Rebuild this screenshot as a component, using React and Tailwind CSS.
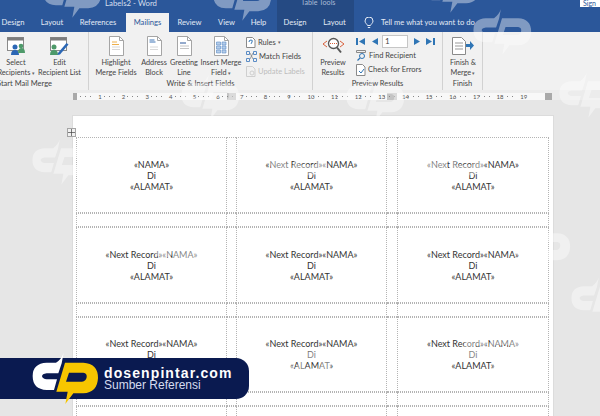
const rows = [
  [['«NAMA»', 'Di', '«ALAMAT»'], ['«Next Record»«NAMA»', 'Di', '«ALAMAT»'], ['«Next Record»«NAMA»', 'Di', '«ALAMAT»']],
  [['«Next Record»«NAMA»', 'Di', '«ALAMAT»'], ['«Next Record»«NAMA»', 'Di', '«ALAMAT»'], ['«Next Record»«NAMA»', 'Di', '«ALAMAT»']],
  [['«Next Record»«NAMA»', 'Di', '«ALAMAT»'], ['«Next Record»«NAMA»', 'Di', '«ALAMAT»'], ['«Next Record»«NAMA»', 'Di', '«ALAMAT»']],
];

const tabs = [
  ['Design', 'w-[22px] ml-[2px]'],
  ['Layout', 'w-[22px] ml-[17px]'],
  ['References', 'w-[36px] ml-[17px]'],
  ['Mailings', 'w-[43px] ml-[10px] h-full bg-[#f1f1f1] text-[#2b579a]'],
  ['Review', 'w-[23px] ml-[9px]'],
  ['View', 'w-[17px] ml-[17px]'],
  ['Help', 'w-[17px] ml-[15px]'],
  ['Design', 'w-[22px] ml-[17px]'],
  ['Layout', 'w-[23px] ml-[17px]'],
];

// --- Logo mark, used for the banner and the watermarks ---
function Mark({ left, right, className = '' }) {
  return (
    <svg viewBox="0 0 270 180" className={className}>
      <path d="M131 8L125 40L115 70L80 70Q66 72 66 79Q68 87 80 88L111 88L102 120L80 120Q38 118 38 78Q38 40 80 38L108 38Q124 28 131 8Z" fill={left} />
      <path fillRule="evenodd" d="M135 38L190 38Q234 40 234 84Q232 128 190 130L160 130L136 162L143 125L109 125ZM147 68L190 68Q202 70 200 82Q198 94 186 95L138 95Z" fill={right} />
    </svg>
  );
}

function Wm({ className }) {
  return <Mark left="#fff" right="#fff" className={`absolute w-[80px] h-[53px] opacity-[0.4] pointer-events-none ${className}`} />;
}

// --- Ribbon icons ---
function SheetIcon({ kind }) {
  return (
    <svg width="15" height="20" viewBox="0 0 15 20" fill="none">
      <path d="M.5.5h10l4 4v15H.5z" fill="#fff" stroke="#a5a5a5" />
      <path d="M10.500.5v4h4" stroke="#a5a5a5" />
      {kind === 'highlight' && <><path d="M3 6h5M3 8.500h7" stroke="#eeb04c" /><path d="M3 11h8M3 13.500h8" stroke="#d8d8d8" /></>}
      {kind === 'address' && <><path d="M2.500 4h5M2.500 6h6" stroke="#3f74b5" /><path d="M3 11h8M3 13.500h8" stroke="#d8d8d8" /></>}
      {kind === 'greeting' && <><path d="M3 7h6" stroke="#2b579a" /><path d="M3 10h9M3 12.500h9" stroke="#c4c4c4" /></>}
      {kind === 'field' && <path d="M2.500 6h4v3h-4zM8 6h4v3H8zM2.500 10h4v3h-4zM8 10h4v3H8zM2.500 14h4v3h-4zM8 14h4v3H8z" fill="#b5cde9" stroke="#5b8cc6" strokeWidth=".6" />}
    </svg>
  );
}

function RecipientsIcon({ edit }) {
  return (
    <svg width="19" height="18" viewBox="0 0 19 18" fill="none">
      <rect x=".5" y=".5" width="16" height="13" fill="#fff" stroke="#8a8a8a" />
      <rect x=".5" y=".5" width="16" height="3" fill="#7d7d7d" />
      <circle cx={edit ? 4 : 8} cy="10" r="2.500" fill={edit ? '#4e9a6a' : '#2b67b5'} />
      <path d={edit ? 'M0 18q0-5 4-5t4 5z' : 'M4 18q0-5 4-5t4 5z'} fill={edit ? '#4e9a6a' : '#2b67b5'} />
      {edit ? (
        <path d="M8 16l8.500-10 2 1.500-8.500 10-2.500.5z" fill="#2b67b5" />
      ) : (
        <>
          <circle cx="14" cy="9" r="2.300" fill="#4e9a6a" />
          <path d="M11 16q0-5 3.500-5t3.500 5z" fill="#4e9a6a" />
        </>
      )}
    </svg>
  );
}

function BigButton({ icon, lines, width, caret }) {
  return (
    <div className="flex flex-col items-center shrink-0" style={{ width }}>
      <div className="h-[21px] flex items-center justify-center">{icon}</div>
      <div className="mt-[2px] text-center leading-[10px] text-[7.3px] text-[#444] whitespace-nowrap">
        <div>{lines[0]}</div>
        <div>{lines[1]}{caret && <span className="text-[5px] text-[#666]"> ▾</span>}</div>
      </div>
    </div>
  );
}

function SmallRow({ icon, label, faded, caret }) {
  return (
    <div className={`flex items-center gap-[2px] h-[14.5px] text-[7.5px] whitespace-nowrap ${faded ? 'text-[#bdbdbd]' : 'text-[#444]'}`}>
      {icon}
      <span>{label}</span>
      {caret && <span className="text-[5px] text-[#666]">▾</span>}
    </div>
  );
}

function Group({ label, width, children, labelClass = 'text-center' }) {
  return (
    <div className="flex flex-col h-full pt-[2px] shrink-0 overflow-hidden border-r border-[#d2d2d2]" style={{ width }}>
      <div className="flex-1 flex pt-[1px]">{children}</div>
      <div className={`text-[7.5px] leading-[10px] h-[11px] text-[#444] whitespace-nowrap ${labelClass}`}>{label}</div>
    </div>
  );
}

function NavArrow({ d }) {
  return (
    <svg width="9" height="9" viewBox="0 0 9 9" className="shrink-0">
      <path d={d} fill="#2f75b5" />
    </svg>
  );
}

function Ruler() {
  const nums = Array.from({ length: 19 }, (_, i) => i + 1);
  return (
    <div className="h-[10px] bg-[#ececec] pl-[73px] pt-[3px]">
      <div className="relative w-[479px] h-[7px] bg-[#f8f8f8] flex pl-[3px] text-[6px] leading-[7px] text-[#555]">
        <div className="absolute left-0 top-0 w-[4px] h-full bg-[#a9a9a9]" />
        <div className="absolute left-[154px] top-0 w-[9px] h-full bg-[#c4c4c4]" />
        <div className="absolute left-[314px] top-0 w-[10px] h-full bg-[#c4c4c4]" />
        <div className="absolute right-0 top-0 w-[7px] h-full bg-[#a9a9a9]" />
        {nums.map((n) => (
          <div key={n} className="w-[23.65px] shrink-0 flex justify-end items-center gap-[4px] relative">
            <span className="w-[1px] h-[1px] bg-[#888]" />
            <span className="w-[1px] h-[1px] bg-[#888]" />
            <span className="w-[1px] h-[1px] bg-[#888] mr-[1px]" />
            <span className="translate-x-[2px]">{n}</span>
          </div>
        ))}
      </div>
    </div>
  );
}

function Cell({ lines = [] }) {
  return (
    <div className="border border-dotted border-[#b4b4b4] flex flex-col items-center justify-center text-[9px] leading-[11px] text-[#333] whitespace-nowrap">
      {lines.map((l, i) => <div key={i}>{l}</div>)}
    </div>
  );
}

function Spacer() {
  return <div className="border-y border-dotted border-[#b4b4b4]" />;
}

export default function App() {
  return (
    <div className="relative w-[600px] h-[416px] overflow-hidden bg-[#e6e6e6] font-['Lato','Liberation_Sans',sans-serif]">
      {/* --- Title bar + tabs --- */}
      <div className="relative h-[32px] bg-[#2b579a] text-white">
        <div className="absolute left-[277px] top-0 w-[77px] h-full bg-[#254a83]" />
        <div className="absolute left-[105px] top-[-2px] text-[7.8px] leading-[10px] text-[#d5dfee]">Labels2 - Word</div>
        <div className="absolute left-[301px] top-[-2px] text-[7.2px] leading-[10px] text-[#a9bbd6]">Table Tools</div>
        <div className="absolute right-0 top-0 w-[20px] h-[7px] bg-white text-[7px] leading-[6px] text-[#2b579a] pl-[3px] overflow-hidden">Sign</div>
        <div className="absolute left-0 top-[13px] right-0 h-[19px] flex items-center text-[7.6px] text-[#e4ebf5]">
          {tabs.map(([name, cls], i) => (
            <span key={i} className={`flex items-center justify-center whitespace-nowrap shrink-0 ${cls}`}>{name}</span>
          ))}
          <svg width="10" height="12" viewBox="0 0 10 12" fill="none" className="ml-[18px] shrink-0">
            <path d="M3.500 8.500C3 7 1 6 1 4a4 4 0 0 1 8 0c0 2-2 3-2.500 4.500zM3.800 10.500h2.400" stroke="#e4ebf5" />
          </svg>
          <span className="ml-[7px] whitespace-nowrap">Tell me what you want to do</span>
        </div>
      </div>

      {/* --- Ribbon --- */}
      <div className="h-[58px] bg-[#f1f1f1] flex">
        <Group label="Start Mail Merge" width={89} labelClass="-ml-[3px]">
          <div className="-ml-[4px] flex">
            <BigButton width={40} caret lines={['Select', 'Recipients']} icon={<RecipientsIcon />} />
            <BigButton width={47} lines={['Edit', 'Recipient List']} icon={<RecipientsIcon edit />} />
          </div>
        </Group>
        <Group label="Write & Insert Fields" width={224}>
          <div className="flex pl-[6px]">
            <BigButton width={42} lines={['Highlight', 'Merge Fields']} icon={<SheetIcon kind="highlight" />} />
            <BigButton width={34} lines={['Address', 'Block']} icon={<SheetIcon kind="address" />} />
            <BigButton width={26} lines={['Greeting', 'Line']} icon={<SheetIcon kind="greeting" />} />
            <BigButton width={48} caret lines={['Insert Merge', 'Field']} icon={<SheetIcon kind="field" />} />
            <div className="ml-[1px] flex flex-col">
              <SmallRow caret label="Rules" icon={<svg width="10" height="11" viewBox="0 0 10 11" fill="none"><path d="M.5.5h6l2.500 2.500v7.500H.5z" fill="#fff" stroke="#8a8a8a" /><path d="M3 5q0-2 2-2t1 2-1 2" stroke="#2f75b5" /></svg>} />
              <SmallRow label="Match Fields" icon={<svg width="11" height="11" viewBox="0 0 11 11" fill="none"><path d="M.5.5h3v3h-3zM7.500.5h3v3h-3zM.5 7.500h3v3h-3zM7.500 7.500h3v3h-3z" stroke="#5b8cc6" /><path d="M4 2l3 6M7 2L4 8" stroke="#666" strokeWidth=".6" /></svg>} />
              <SmallRow faded label="Update Labels" icon={<svg width="10" height="11" viewBox="0 0 10 11" fill="none"><path d="M.5.5h6l2.500 2.500v7.500H.5z" stroke="#cfcfcf" /><circle cx="6" cy="7" r="2" stroke="#cfcfcf" /></svg>} />
            </div>
          </div>
        </Group>
        <Group label="Preview Results" width={130}>
          <BigButton width={40} lines={['Preview', 'Results']} icon={
            <svg width="23" height="17" viewBox="0 0 23 17" fill="none">
              <path d="M5 4L1 7l4 3M18 4l4 3-4 3" stroke="#d9603c" />
              <circle cx="11.500" cy="6.500" r="5" fill="#fff" stroke="#555" strokeWidth="1.300" />
              <path d="M15 10.500l4 5" stroke="#555" strokeWidth="2" />
              <path d="M8 6.500h7" stroke="#d9603c" strokeDasharray="1 1" />
            </svg>
          } />
          <div className="pl-[3px] flex flex-col">
            <div className="flex items-center h-[13px]">
              <NavArrow d="M0 1h2v7H0zM9 1v7L3 4.500z" />
              <span className="ml-[5px]"><NavArrow d="M8 1v7L2 4.500z" /></span>
              <div className="ml-[3px] w-[26px] h-[13px] bg-white border border-[#c6c6c6] text-[8px] leading-[11px] pl-[2px] text-[#444]">1</div>
              <span className="ml-[5px]"><NavArrow d="M1 1v7l6-3.500z" /></span>
              <span className="ml-[4px]"><NavArrow d="M0 1v7l6-3.500zM7 1h2v7H7z" /></span>
            </div>
            <div>
              <SmallRow label="Find Recipient" icon={<svg width="11" height="11" viewBox="0 0 11 11" fill="none"><path d="M.5.5h9v2h-9z" stroke="#8a8a8a" /><circle cx="6" cy="6" r="2.500" stroke="#2f75b5" /><path d="M4 8L1.500 10.500" stroke="#2f75b5" strokeWidth="1.300" /></svg>} />
              <SmallRow label="Check for Errors" icon={<svg width="10" height="12" viewBox="0 0 10 12" fill="none"><path d="M.5.5h6l2.500 2.500v8.500H.5z" fill="#fff" stroke="#8a8a8a" /><path d="M3 7l2 2 3-4" stroke="#2f75b5" /></svg>} />
            </div>
          </div>
        </Group>
        <Group label="Finish" width={40}>
          <BigButton width={40} caret lines={['Finish &', 'Merge']} icon={
            <svg width="24" height="20" viewBox="0 0 24 20" fill="none">
              <path d="M1.500 1.500h9l4 4v13h-13z" fill="#fff" stroke="#8a8a8a" />
              <path d="M4 7h8M4 10h8M4 13h8" stroke="#999" />
              <path d="M15 8h4V5l4 4.500-4 4.500v-3h-4z" fill="#2f75b5" />
            </svg>
          } />
        </Group>
      </div>

      <Ruler />

      {/* --- Document --- */}
      <div className="relative pl-[73px] pt-[16px]">
        <div className="w-[480px] bg-white h-[300px] pt-[21px] pl-[3px] shadow-[0_0_0_1px_#dcdcdc]">
          <div className="grid grid-cols-[151px_9px_151px_10px_152px] grid-rows-[76px_14px_76px_14px_75px_14px_76px] w-[473px]">
            {rows.map((r, i) => (
              <div key={i} className="contents">
                <Cell lines={r[0]} />
                <Spacer />
                <Cell lines={r[1]} />
                <Spacer />
                <Cell lines={r[2]} />
                <Cell /><Spacer /><Cell /><Spacer /><Cell />
              </div>
            ))}
            <Cell /><Spacer /><Cell /><Spacer /><Cell />
          </div>
        </div>
        <div className="absolute left-[67px] top-[28px] w-[9px] h-[9px] bg-[#f1f1f1] border border-[#a5a5a5] flex items-center justify-center">
          <svg width="7" height="7" viewBox="0 0 7 7" fill="none"><path d="M3.500 0v7M0 3.500h7" stroke="#444" strokeWidth=".7" /></svg>
        </div>
      </div>

      {/* --- Watermarks --- */}
      <Wm className="left-[32px] top-[-30px]" />
      <Wm className="left-[202px] top-[-27px]" />
      <Wm className="left-[410px] top-[-35px]" />
      <Wm className="left-[462px] top-[7px]" />
      <Wm className="left-[21px] top-[137px]" />
      <Wm className="left-[170px] top-[72px]" />
      <Wm className="left-[335px] top-[74px]" />
      <Wm className="left-[548px] top-[70px]" />
      <Wm className="left-[258px] top-[137px]" />
      <Wm className="left-[415px] top-[137px]" />
      <Wm className="left-[140px] top-[222px]" />
      <Wm className="left-[262px] top-[340px]" />
      <Wm className="left-[452px] top-[325px]" />
      <Wm className="left-[501px] top-[222px]" />
      <Wm className="left-[560px] top-[275px]" />

      {/* --- Banner --- */}
      <div className="absolute left-0 top-[358px] w-[249px] h-[41px] bg-[#0a1a50] rounded-r-[13px] flex items-center pl-[104px]">
        <div>
          <div className="text-[14px] leading-[14px] font-bold tracking-[1.1px] text-white font-['Liberation_Sans',sans-serif]">dosenpintar.com</div>
          <div className="text-[12px] leading-[11px] text-[#d6dcef] font-['Liberation_Sans',sans-serif]">Sumber Referensi</div>
        </div>
      </div>
      <Mark left="#fff" right="#f7c600" className="absolute left-[20px] top-[350px] w-[90px] h-[60px]" />
    </div>
  );
}
